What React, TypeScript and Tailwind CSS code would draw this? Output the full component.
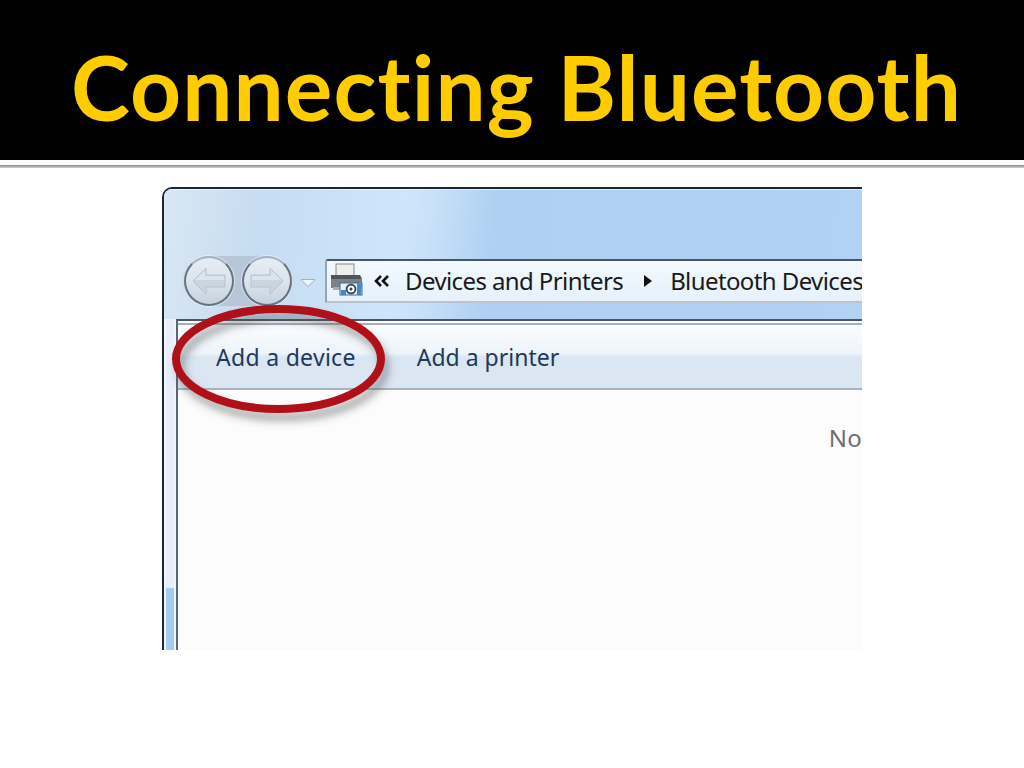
export default function App() {
  return (
    <div className="w-[1024px] h-[768px] bg-white overflow-hidden flex flex-col font-['Open_Sans',sans-serif]">
      <header className="h-[160px] shrink-0 bg-black flex items-center pl-[71px]">
        <h1 className="text-[#ffcc00] text-[89px] leading-none font-bold whitespace-nowrap tracking-[1.1px] [font-variant-ligatures:none] font-['Lato',sans-serif] mt-[12px]">
          Connecting Bluetooth
        </h1>
      </header>
      <div className="h-[5px] shrink-0 bg-white" />
      <div className="h-[3px] shrink-0 bg-gradient-to-b from-[#8a8a8a] to-[#d4d4d4]" />
      <section className="relative mt-[19px] ml-[162px] w-[700px] h-[463px] overflow-hidden border-t-[2px] border-l-[2px] border-[#1c2733] rounded-tl-[10px] bg-[#b2d3f4] flex flex-col">
        <div className="h-[130px] shrink-0 flex items-end border-t border-white/60 bg-[linear-gradient(97deg,#d9e7f4_0%,#c6dcf1_14%,#cfe5fb_34%,#c6dff8_39%,#aed0f2_47%,#b1d2f4_100%)]">
          <div className="flex items-center pl-[19px] mb-[13px]">
            <div className="flex items-center gap-[8px] rounded-full bg-[#b7c6d8] px-[1px] shadow-[0_0_3px_#cfd9e4]">
              <NavButton flip />
              <NavButton />
            </div>
            <svg width="18" height="10" viewBox="0 0 18 10" className="ml-[7px] mt-[4px]">
              <path d="M1 1.5h14L8 8.5z" fill="#eef5fb" stroke="#9fb2c4" />
            </svg>
          </div>
          <div className="ml-[7px] mb-[16px] flex-1 h-[44px] bg-[linear-gradient(#f3f9fe,#e6f1fb)] border-t-[2px] border-l-[2px] border-b-[2px] border-t-[#4a5663] border-l-[#98a4b0] border-b-[#b9c4cf] rounded-tl-[3px] flex items-center pl-[3px] whitespace-nowrap text-[24px] tracking-[-0.6px] text-[#1a1a1a] font-['Noto_Sans',sans-serif]">
            <PrinterIcon />
            <svg width="16" height="12" viewBox="0 0 16 12" className="ml-[11px] shrink-0 -mt-[1px]">
              <path d="M7 1 2 6l5 5M14 1 9 6l5 5" fill="none" stroke="#111" strokeWidth="2.6" />
            </svg>
            <span className="ml-[15px]">Devices and Printers</span>
            <svg width="10" height="14" viewBox="0 0 10 14" className="ml-[20px] shrink-0">
              <path d="M1 1l8 6-8 6z" fill="#111" />
            </svg>
            <span className="ml-[17px]">Bluetooth Devices</span>
          </div>
        </div>
        <div className="flex-1 flex min-h-0">
          <div className="w-[12px] shrink-0 flex flex-col px-[2px] bg-[#f0f5fb]">
            <div className="h-[269px] bg-[#e7f0fa]" />
            <div className="flex-1 bg-[#a6cbf0]" />
          </div>
          <div className="flex-1 flex flex-col border-l-[2px] border-t-[2px] border-l-[#5a6573] border-t-[#4a5663]">
            <div className="h-[69px] shrink-0 border-b-[2px] border-[#a8b2c4] bg-[linear-gradient(#fdfeff_0,#fdfeff_2px,#a6b0bb_2px,#a6b0bb_4px,#fbfdff_4px,#eef4fb_48%,#dbe6f3_54%,#dbe6f4_100%)] flex items-center pl-[38px] pt-[6px] text-[23px] tracking-[0.3px] text-[#1e395b] font-['Noto_Sans',sans-serif]">
              <span>Add a device</span>
              <span className="ml-[61px] tracking-[0px]">Add a printer</span>
            </div>
            <div className="flex-1 bg-[#fcfcfc] flex justify-end overflow-hidden pt-[33px]">
              <span className="text-[24px] leading-[30px] text-[#6f6f6f] font-['Noto_Sans',sans-serif] tracking-[0.3px] whitespace-nowrap">No</span>
            </div>
          </div>
        </div>
        <svg width="240" height="135" viewBox="0 0 240 135" className="absolute left-[4px] top-[112px]">
          <defs>
            <filter id="ringShadow" x="-20%" y="-20%" width="140%" height="150%">
              <feGaussianBlur stdDeviation="4" />
            </filter>
          </defs>
          <ellipse cx="110.5" cy="58" rx="102.5" ry="50" fill="none" stroke="#4a4a4a" strokeOpacity="0.55" strokeWidth="7" filter="url(#ringShadow)" transform="translate(4 8)" />
          <ellipse cx="110.5" cy="58" rx="102.5" ry="50" fill="none" stroke="#b0101a" strokeWidth="8" />
        </svg>
      </section>
    </div>
  );
}

function NavButton({ flip }: { flip?: boolean }) {
  return (
    <div className="w-[50px] h-[50px] rounded-full border-[2px] border-[#667482] border-t-[#a4b3c2] bg-[linear-gradient(#e7edf3,#dbe4ec_50%,#c5d2de)] shadow-[0_0_0_1px_rgba(255,255,255,0.5)] flex items-center justify-center">
      <svg width="36" height="28" viewBox="0 0 36 28" className={flip ? "-scale-x-100" : ""}>
        <path d="M2 8h19V1l13 13-13 13v-7H2z" fill="#c9d5df" stroke="#b7c4d0" />
        <path d="M3 9h19V3l10 10H3z" fill="#dbe5ec" />
      </svg>
    </div>
  );
}

function PrinterIcon() {
  return (
    <svg width="33" height="33" viewBox="0 0 33 33" className="shrink-0 -mt-[3px]">
      <rect x="6" y="1" width="18" height="12" fill="#eeeeee" stroke="#8a8a8a" />
      <path d="M1 12h29l2 3v10H1z" fill="#7d8185" />
      <path d="M1 12h29l1 4H1z" fill="#505458" />
      <rect x="3" y="24" width="8" height="3" fill="#a9adb1" />
      <rect x="10" y="20" width="22" height="12" fill="#e8eff6" stroke="#2f6fa8" />
      <circle cx="21" cy="26" r="4.4" fill="#fff" stroke="#33414f" strokeWidth="1.8" />
      <circle cx="21" cy="26" r="1.5" fill="#33414f" />
      <path d="M27 20l5 1-1 11h-4z" fill="#4b87bd" />
      <rect x="11" y="27" width="5" height="5" fill="#4b87bd" />
    </svg>
  );
}
